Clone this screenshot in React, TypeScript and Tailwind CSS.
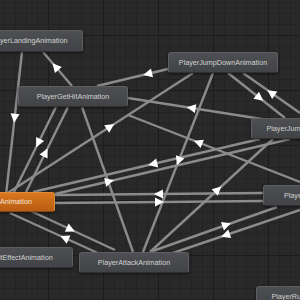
import React from 'react';

type Node = { name: string; x: number; y: number; w: number; h: number; active?: boolean };
type Link = { x1: number; y1: number; x2: number; y2: number; t?: number };

const nodes: Node[] = [
  { name: 'PlayerLandingAnimation', x: -26, y: 30, w: 109, h: 22 },
  { name: 'PlayerGetHitAnimation', x: 18, y: 86, w: 110, h: 21 },
  { name: 'PlayerJumpDownAnimation', x: 168, y: 52, w: 110, h: 21 },
  { name: 'PlayerJumpUpAnimation', x: 251, y: 118, w: 110, h: 21 },
  { name: 'PlayerIdleAnimation', x: -55, y: 192, w: 110, h: 20, active: true },
  { name: 'PlayerWalkAnimation', x: 263, y: 185, w: 110, h: 21 },
  { name: 'PlayerHitEffectAnimation', x: -47, y: 247, w: 120, h: 21 },
  { name: 'PlayerAttackAnimation', x: 79, y: 252, w: 110, h: 21 },
  { name: 'PlayerRunningAnimation', x: 256, y: 286, w: 110, h: 21 },
];

// transitions, arrow drawn at t along from -> to
const links: Link[] = [
  { x1: 22, y1: 52, x2: 6, y2: 195, t: 0.46 },
  { x1: 72, y1: 86, x2: 43, y2: 52, t: 0.56 },
  { x1: 56, y1: 107, x2: 14, y2: 192, t: 0.42 },
  { x1: 26, y1: 192, x2: 68, y2: 107, t: 0.46 },
  { x1: 82, y1: 107, x2: 133, y2: 252 },
  { x1: 0, y1: 198, x2: 193, y2: 73, t: 0.57 },
  { x1: 168, y1: 69, x2: 97, y2: 86, t: 0.28 },
  { x1: 300, y1: 125, x2: 128, y2: 98, t: 0.63 },
  { x1: 300, y1: 182, x2: 128, y2: 115, t: 0.59 },
  { x1: 213, y1: 73, x2: 143, y2: 252, t: 0.49 },
  { x1: 228, y1: 73, x2: 285, y2: 118, t: 0.55 },
  { x1: 300, y1: 113, x2: 243, y2: 73, t: 0.5 },
  { x1: 260, y1: 139, x2: 33, y2: 192, t: 0.47 },
  { x1: 55, y1: 194, x2: 290, y2: 139, t: 0.23 },
  { x1: 263, y1: 193, x2: 55, y2: 195, t: 0.5 },
  { x1: 55, y1: 203, x2: 263, y2: 201, t: 0.5 },
  { x1: 100, y1: 254, x2: 10, y2: 213, t: 0.39 },
  { x1: 20, y1: 206, x2: 115, y2: 250, t: 0.53 },
  { x1: 150, y1: 252, x2: 273, y2: 139, t: 0.55 },
  { x1: 150, y1: 252, x2: 277, y2: 207, t: 0.6 },
  { x1: 300, y1: 210, x2: 170, y2: 254, t: 0.57 },
];

const arrow = (l: Link) => {
  const dx = l.x2 - l.x1;
  const dy = l.y2 - l.y1;
  const len = Math.hypot(dx, dy);
  const ux = dx / len;
  const uy = dy / len;
  const px = l.x1 + dx * (l.t ?? 0.5);
  const py = l.y1 + dy * (l.t ?? 0.5);
  const tip = [px + ux * 5, py + uy * 5];
  const b1 = [px - ux * 4 - uy * 4.5, py - uy * 4 + ux * 4.5];
  const b2 = [px - ux * 4 + uy * 4.5, py - uy * 4 - ux * 4.5];
  return `${tip[0]},${tip[1]} ${b1[0]},${b1[1]} ${b2[0]},${b2[1]}`;
};

const App = () => {
  return (
    <div className="relative w-[300px] h-[300px] overflow-hidden bg-[#292929]">
      <svg className="absolute inset-0" width="300" height="300">
        <defs>
          <pattern id="minor" x="4" y="2" width="11" height="11" patternUnits="userSpaceOnUse">
            <path d="M11 0.5 H0.5 V11" fill="none" stroke="#232323" strokeWidth="1" />
          </pattern>
          <pattern id="major" x="48" y="35" width="55" height="55" patternUnits="userSpaceOnUse">
            <path d="M55 0.5 H0.5 V55" fill="none" stroke="#1c1c1c" strokeWidth="1" />
          </pattern>
        </defs>
        <rect width="300" height="300" fill="url(#minor)" />
        <rect width="300" height="300" fill="url(#major)" />
        {links.map((l, i) => (
          <line key={i} x1={l.x1} y1={l.y1} x2={l.x2} y2={l.y2} stroke="#8b8b8b" strokeWidth="2.4" />
        ))}
        {links
          .filter((l) => l.t !== undefined)
          .map((l, i) => (
            <polygon key={i} points={arrow(l)} fill="#ffffff" />
          ))}
      </svg>

      {nodes.map((n) => (
        <div
          key={n.name}
          className={
            n.active
              ? 'absolute flex items-center justify-center rounded-[3px] border border-[#e08b3a] border-b-[#8a4510] bg-gradient-to-b from-[#d9781f] to-[#b85d14] shadow-[0_1px_3px_rgba(0,0,0,0.6)]'
              : 'absolute flex items-center justify-center rounded-[3px] border border-[#5d5f62] border-b-[#2f3032] bg-gradient-to-b from-[#4d4f52] to-[#414346] shadow-[0_1px_3px_rgba(0,0,0,0.6)]'
          }
          style={{ left: n.x, top: n.y, width: n.w, height: n.h }}
        >
          <span
            className={`whitespace-nowrap text-[7.2px] leading-none font-['Liberation_Sans',Arial,sans-serif] ${
              n.active ? 'text-[#f6e7d6]' : 'text-[#d2d2d2]'
            }`}
          >
            {n.name}
          </span>
        </div>
      ))}
    </div>
  );
};

export default App;
